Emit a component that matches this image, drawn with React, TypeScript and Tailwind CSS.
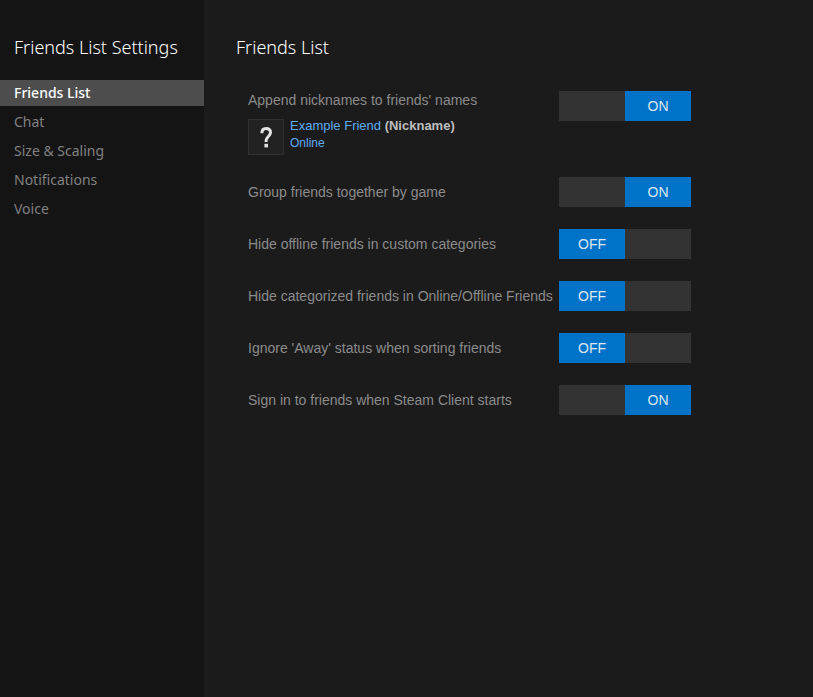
import { useState, type ReactNode } from "react";

const NAV_ITEMS = ["Friends List", "Chat", "Size & Scaling", "Notifications", "Voice"];

const heading = "font-['Noto_Sans',sans-serif] text-lg leading-[22px] font-light text-white";

function Toggle({ id, initial }: { id: string; initial: boolean }) {
  const [on, setOn] = useState(initial);
  return (
    <button
      id={id}
      type="button"
      role="switch"
      aria-checked={on}
      onClick={() => setOn(!on)}
      className={`flex h-[30px] w-[132px] shrink-0 cursor-pointer bg-[#333333] text-sm font-normal text-[#dbe7f2] ${on ? "justify-end" : "justify-start"}`}
    >
      <span className="flex h-full w-1/2 items-center justify-center bg-[#0073c8]">{on ? "ON" : "OFF"}</span>
    </button>
  );
}

function Setting({ id, label, on, children }: { id: string; label: string; on: boolean; children?: ReactNode }) {
  return (
    <div className={`flex ${children ? "items-start" : "items-center"}`}>
      <div className={`w-[311px] shrink-0 ${children ? "pt-px" : ""}`}>
        <label htmlFor={id} className="block whitespace-nowrap text-sm leading-4 text-[#8b8b8b]">
          {label}
        </label>
        {children}
      </div>
      <Toggle id={id} initial={on} />
    </div>
  );
}

function ExampleFriend() {
  return (
    <div className="mt-[11px] flex gap-1.5">
      <div className="flex size-9 items-center justify-center border border-[#303030] bg-[#222222]">
        <svg viewBox="0 0 34 34" className="size-[34px]" fill="none" aria-hidden="true">
          <path d="M12.9 13.2 C12.9 9.8 14.5 8.5 17 8.5 C19.7 8.5 21.5 9.9 21.5 12.5 C21.5 16.2 17.1 16.8 17.1 20.6 V22" stroke="#e3e3e3" strokeWidth="3" />
          <rect x="15.4" y="23.8" width="3.6" height="3.6" fill="#e3e3e3" />
        </svg>
      </div>
      <div className="whitespace-nowrap">
        <p className="text-[13px] leading-[14px] text-[#5fabf2]">
          Example Friend <span className="font-bold text-[#bfbfbf]">(Nickname)</span>
        </p>
        <p className="text-xs leading-5 text-[#5fabf2]">Online</p>
      </div>
    </div>
  );
}

export default function App() {
  const [active, setActive] = useState("Friends List");
  return (
    <div className="flex min-h-screen bg-[#1b1b1b] font-['Liberation_Sans',Arial,sans-serif]">
      <aside className="w-51 shrink-0 bg-[#141414] pt-9">
        <h1 className={`px-3.5 whitespace-nowrap ${heading}`}>Friends List Settings</h1>
        <nav className="mt-[22px] flex flex-col gap-[3px]">
          {NAV_ITEMS.map((item) => (
            <button
              key={item}
              type="button"
              onClick={() => setActive(item)}
              className={`h-[26px] cursor-pointer px-3.5 text-left font-['Noto_Sans',sans-serif] text-sm leading-5 ${
                item === active ? "bg-[#4d4d4d] font-medium text-white" : "text-[#818181]"
              }`}
            >
              {item}
            </button>
          ))}
        </nav>
      </aside>
      <main className="grow px-8 pt-9">
        <h2 className={heading}>{active}</h2>
        <div className="mt-[33px] flex flex-col gap-[22px] pl-3">
          <Setting id="append" label="Append nicknames to friends' names" on>
            <ExampleFriend />
          </Setting>
          <Setting id="group" label="Group friends together by game" on />
          <Setting id="offline" label="Hide offline friends in custom categories" on={false} />
          <Setting id="categorized" label="Hide categorized friends in Online/Offline Friends" on={false} />
          <Setting id="away" label="Ignore 'Away' status when sorting friends" on={false} />
          <Setting id="signin" label="Sign in to friends when Steam Client starts" on />
        </div>
      </main>
    </div>
  );
}
